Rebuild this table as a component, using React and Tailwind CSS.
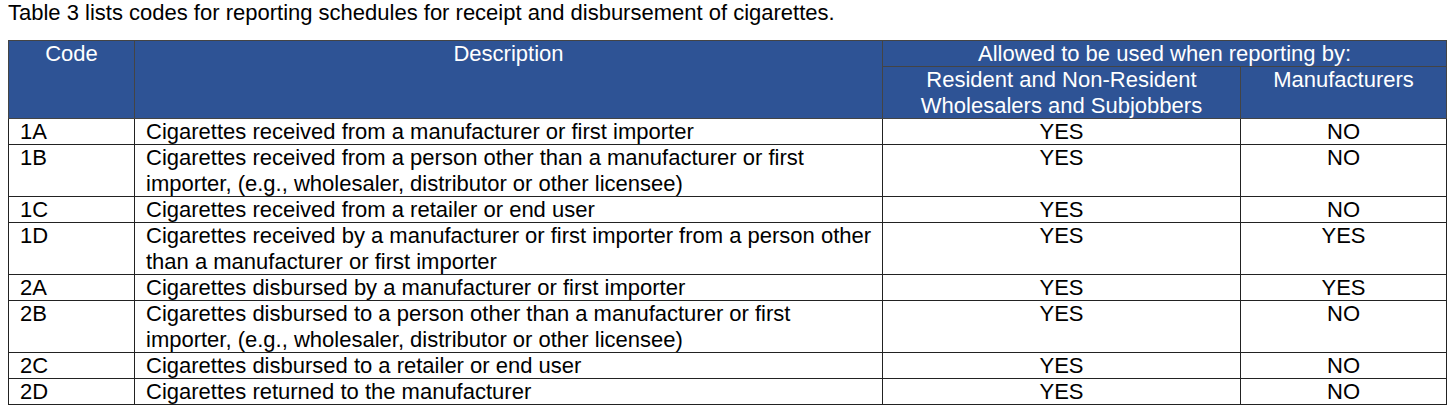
import React from "react";

const rows = [
  ["1A", ["Cigarettes received from a manufacturer or first importer"], "YES", "NO"],
  ["1B", ["Cigarettes received from a person other than a manufacturer or first", "importer, (e.g., wholesaler, distributor or other licensee)"], "YES", "NO"],
  ["1C", ["Cigarettes received from a retailer or end user"], "YES", "NO"],
  ["1D", ["Cigarettes received by a manufacturer or first importer from a person other", "than a manufacturer or first importer"], "YES", "YES"],
  ["2A", ["Cigarettes disbursed by a manufacturer or first importer"], "YES", "YES"],
  ["2B", ["Cigarettes disbursed to a person other than a manufacturer or first", "importer, (e.g., wholesaler, distributor or other licensee)"], "YES", "NO"],
  ["2C", ["Cigarettes disbursed to a retailer or end user"], "YES", "NO"],
  ["2D", ["Cigarettes returned to the manufacturer"], "YES", "NO"],
];

export default function App() {
  return (
    <div className="w-[1456px] h-[413px] bg-white text-black text-[22px] leading-[25px]" style={{ fontFamily: '"Liberation Sans", Arial, sans-serif' }}>
      <div className="pl-[8px] h-[40px] leading-[26px]">Table 3 lists codes for reporting schedules for receipt and disbursement of cigarettes.</div>
      <table className="ml-[8px] border-collapse table-fixed w-[1438px]">
        <colgroup>
          <col className="w-[126px]" />
          <col className="w-[748px]" />
          <col className="w-[358px]" />
          <col className="w-[206px]" />
        </colgroup>
        <thead>
          <tr className="bg-[#2e5395] text-white">
            <th rowSpan={2} className="font-normal align-top text-center border border-[#444] p-0">Code</th>
            <th rowSpan={2} className="font-normal align-top text-center border border-[#444] p-0">Description</th>
            <th colSpan={2} className="font-normal align-top text-center border border-[#444] p-0"><div className="h-[25px]">Allowed to be used when reporting by:</div></th>
          </tr>
          <tr className="bg-[#2e5395] text-white">
            <th className="font-normal align-top text-center border border-[#444] p-0"><div className="h-[51px] leading-[25.5px]">Resident and Non-Resident<br />Wholesalers and Subjobbers</div></th>
            <th className="font-normal align-top text-center border border-[#444] p-0">Manufacturers</th>
          </tr>
        </thead>
        <tbody>
          {rows.map(([code, desc, a, b]) => {
            const h = desc.length > 1 ? "h-[51px] leading-[25.5px]" : "h-[25px] leading-[25px]";
            return (
              <tr key={code}>
                <td className="align-top border border-[#222] pl-[11px] p-0">
                  <div className={h}>{code}</div>
                </td>
                <td className="align-top border border-[#222] pl-[11px] p-0 whitespace-nowrap">
                  <div className={h}>
                    {desc.map((l, i) => (
                      <div key={i}>{l}</div>
                    ))}
                  </div>
                </td>
                <td className="align-top border border-[#222] text-center p-0"><div className={h}>{a}</div></td>
                <td className="align-top border border-[#222] text-center p-0"><div className={h}>{b}</div></td>
              </tr>
            );
          })}
        </tbody>
      </table>
    </div>
  );
}
